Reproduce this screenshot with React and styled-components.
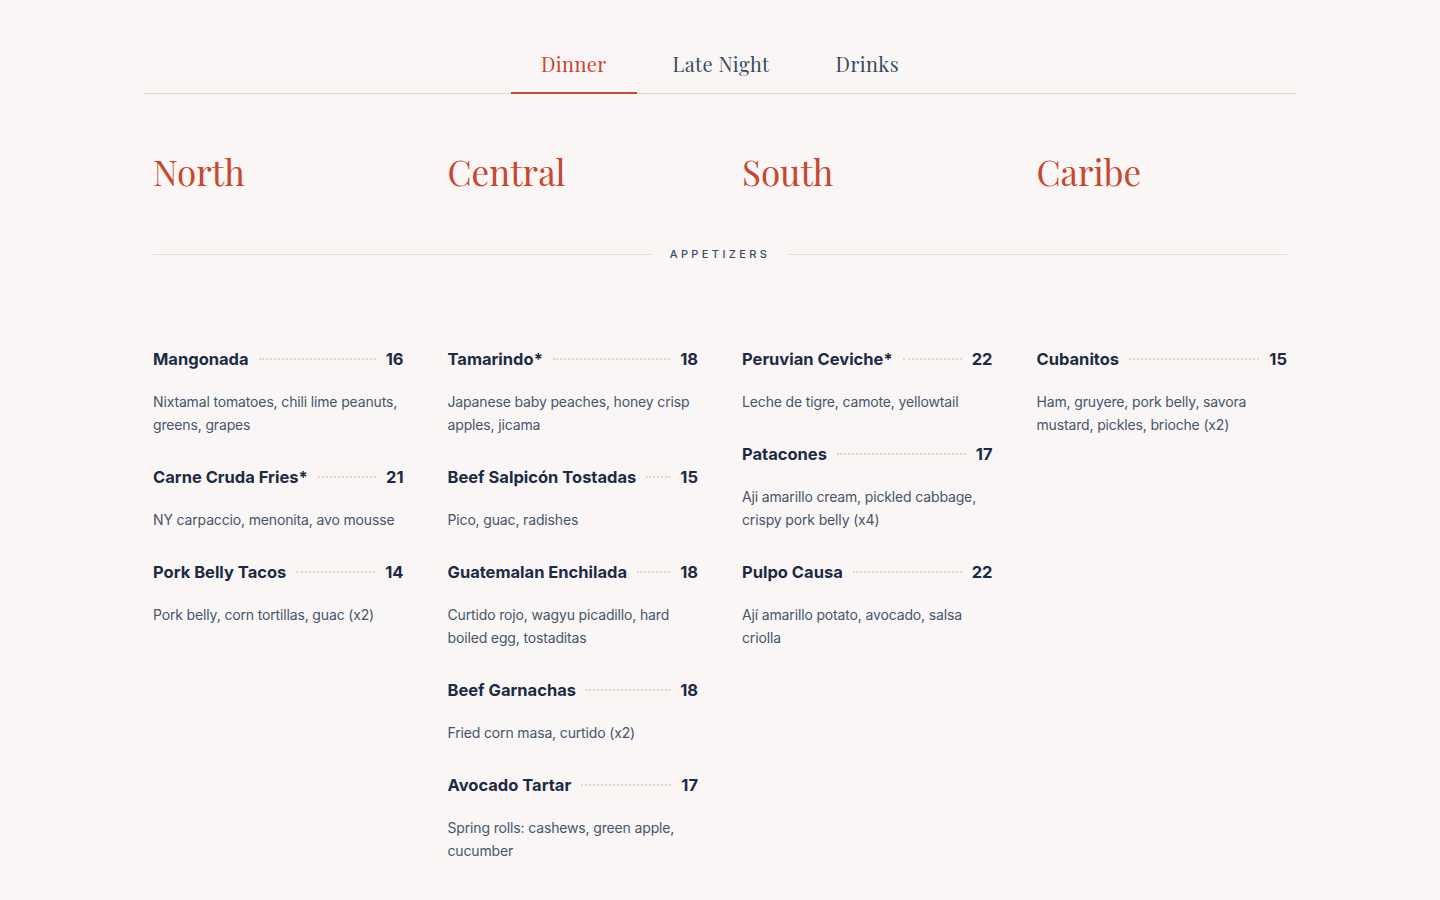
import React, { useState } from "react";
import styled, { createGlobalStyle } from "styled-components";

const GlobalStyle = createGlobalStyle`
  html, body {
    margin: 0;
    background: #faf6f5;
  }
  body {
    font-family: "Inter", "Noto Sans", sans-serif;
    color: #1c2b45;
  }
`;

const Page = styled.div`
  min-height: 900px;
  padding: 40px 143px 0;
  box-sizing: border-box;
`;

const Tabs = styled.nav`
  display: flex;
  justify-content: center;
  gap: 6px;
  border-bottom: 1px solid #e6d6d2;
`;

const Tab = styled.button`
  background: none;
  border: none;
  cursor: pointer;
  font-family: "Playfair Display", "Liberation Serif", serif;
  font-size: 20px;
  letter-spacing: 0.4px;
  padding: 10px 30px 15px;
  margin-bottom: -1px;
  color: ${(p) => (p.$active ? "#c7482f" : "#3a4a64")};
  border-bottom: 2px solid ${(p) => (p.$active ? "#c7482f" : "transparent")};
`;

const Body = styled.div`
  padding: 0 10px;
`;

const Grid = styled.div`
  display: grid;
  grid-template-columns: repeat(4, 1fr);
  column-gap: 44px;
`;

const Region = styled.h2`
  margin: 54px 0 0;
  font-family: "Playfair Display", "Liberation Serif", serif;
  font-weight: 400;
  font-size: 35px;
  line-height: 48px;
  color: #c7482f;
`;

const Divider = styled.div`
  display: flex;
  align-items: center;
  gap: 18px;
  margin: 51px 0 86px;

  &::before,
  &::after {
    content: "";
    flex: 1;
    height: 1px;
    background: #ead8d4;
  }
`;

const DividerLabel = styled.span`
  font-size: 11px;
  letter-spacing: 3.4px;
  color: #3a4a64;
  font-weight: 500;
`;

const Column = styled.div`
  display: flex;
  flex-direction: column;
  gap: 29px;
`;

const Item = styled.div``;

const ItemHead = styled.div`
  display: flex;
  align-items: center;
  gap: 10px;
  height: 24px;
  font-size: 16.5px;
  font-weight: 700;
  color: #1c2b45;
`;

const Leader = styled.span`
  flex: 1;
  height: 0;
  border-top: 2px dotted #ecd3cd;
`;

const Desc = styled.p`
  margin: 19px 0 0;
  font-size: 14px;
  line-height: 23px;
  color: #46556c;
  letter-spacing: -0.15px;
`;

const menu = [
  {
    region: "North",
    items: [
      ["Mangonada", 16, "Nixtamal tomatoes, chili lime peanuts, greens, grapes"],
      ["Carne Cruda Fries*", 21, "NY carpaccio, menonita, avo mousse"],
      ["Pork Belly Tacos", 14, "Pork belly, corn tortillas, guac (x2)"],
    ],
  },
  {
    region: "Central",
    items: [
      ["Tamarindo*", 18, "Japanese baby peaches, honey crisp apples, jicama"],
      ["Beef Salpicón Tostadas", 15, "Pico, guac, radishes"],
      ["Guatemalan Enchilada", 18, "Curtido rojo, wagyu picadillo, hard boiled egg, tostaditas"],
      ["Beef Garnachas", 18, "Fried corn masa, curtido (x2)"],
      ["Avocado Tartar", 17, "Spring rolls: cashews, green apple, cucumber"],
    ],
  },
  {
    region: "South",
    items: [
      ["Peruvian Ceviche*", 22, "Leche de tigre, camote, yellowtail"],
      ["Patacones", 17, "Aji amarillo cream, pickled cabbage, crispy pork belly (x4)"],
      ["Pulpo Causa", 22, "Ají amarillo potato, avocado, salsa criolla"],
    ],
  },
  {
    region: "Caribe",
    items: [["Cubanitos", 15, "Ham, gruyere, pork belly, savora mustard, pickles, brioche (x2)"]],
  },
];

const tabs = ["Dinner", "Late Night", "Drinks"];

export default function App() {
  const [active, setActive] = useState("Dinner");

  return (
    <Page>
      <GlobalStyle />
      <Tabs>
        {tabs.map((t) => (
          <Tab key={t} $active={t === active} onClick={() => setActive(t)}>
            {t}
          </Tab>
        ))}
      </Tabs>
      <Body>
        <Grid>
          {menu.map((col) => (
            <Region key={col.region}>{col.region}</Region>
          ))}
        </Grid>
        <Divider>
          <DividerLabel>APPETIZERS</DividerLabel>
        </Divider>
        <Grid>
          {menu.map((col) => (
            <Column key={col.region}>
              {col.items.map(([name, price, desc]) => (
                <Item key={name}>
                  <ItemHead>
                    <span>{name}</span>
                    <Leader />
                    <span>{price}</span>
                  </ItemHead>
                  <Desc>{desc}</Desc>
                </Item>
              ))}
            </Column>
          ))}
        </Grid>
      </Body>
    </Page>
  );
}
